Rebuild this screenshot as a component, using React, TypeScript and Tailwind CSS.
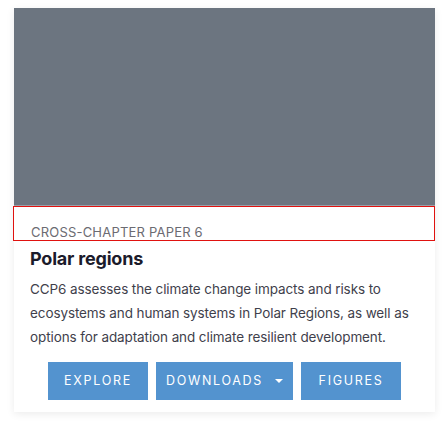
import React from "react";

export default function App() {
  return (
    <div className="w-[448px] h-[448px] bg-white pt-2" style={{ fontFamily: "Inter, 'Liberation Sans', sans-serif" }}>
      <div className="ml-[14px] w-[421px] h-[404px] bg-white shadow-[0_2px_8px_rgba(0,0,0,0.08)] flex flex-col">
        <div className="h-[198px] bg-[#6c7580] border-b border-[#9aa0a8]" />
        <div className="-ml-px w-[422px] h-[35px] border border-[#e0120f] pl-[17px] pt-[18px] overflow-hidden">
          <div className="text-[13px] leading-[14px] text-[#6b6b72] tracking-[0.2px]">CROSS-CHAPTER PAPER 6</div>
        </div>
        <div className="px-4 pt-[6px]">
          <h2 className="text-[18px] leading-[24px] font-bold text-[#1b1b2b] tracking-[-0.2px]">Polar regions</h2>
          <p className="mt-[6px] text-[13.5px] leading-[24px] text-[#3f3f4c] tracking-[-0.1px] pr-2">
            CCP6 assesses the climate change impacts and risks to ecosystems and human systems in Polar Regions, as well as options for adaptation and climate resilient development.
          </p>
          <div className="mt-[13px] flex justify-center gap-2">
            <button className="w-[100px] h-[38px] bg-[#5393cf] text-white text-[12.5px] tracking-[1.7px] flex items-center justify-center">EXPLORE</button>
            <button className="w-[137px] h-[38px] bg-[#5393cf] text-white text-[12.5px] tracking-[1.7px] flex items-center justify-center gap-3">
              <span>DOWNLOADS</span>
              <svg width="8" height="5" viewBox="0 0 8 5"><path d="M0 0 L8 0 L4 4 Z" fill="white" /></svg>
            </button>
            <button className="w-[100px] h-[38px] bg-[#5393cf] text-white text-[12.5px] tracking-[1.7px] flex items-center justify-center">FIGURES</button>
          </div>
        </div>
      </div>
    </div>
  );
}
